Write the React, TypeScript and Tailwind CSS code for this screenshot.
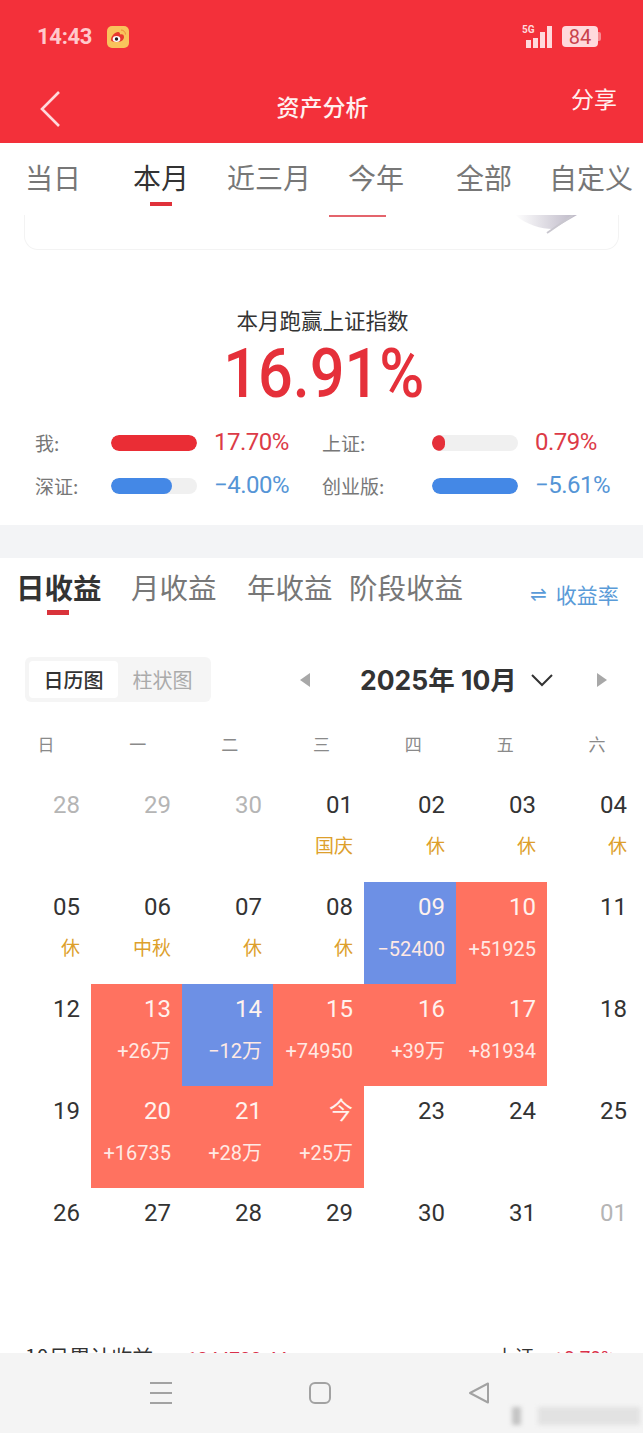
const RED = "#f3303a";
const CN = '"Noto Sans CJK SC", "Noto Sans", sans-serif';
const NUM = '"Roboto", "Noto Sans CJK SC", sans-serif';

type Day = { d: string; sub?: string; tone?: "up" | "down"; muted?: boolean };

const rest = (d: string, sub = "休"): Day => ({ d, sub });
const up = (d: string, sub: string): Day => ({ d, sub, tone: "up" });
const down = (d: string, sub: string): Day => ({ d, sub, tone: "down" });

// calendar rows, Sunday first
const weeks: Day[][] = [
  [{ d: "28", muted: true }, { d: "29", muted: true }, { d: "30", muted: true }, rest("01", "国庆"), rest("02"), rest("03"), rest("04")],
  [rest("05"), rest("06", "中秋"), rest("07"), rest("08"), down("09", "−52400"), up("10", "+51925"), { d: "11" }],
  [{ d: "12" }, up("13", "+26万"), down("14", "−12万"), up("15", "+74950"), up("16", "+39万"), up("17", "+81934"), { d: "18" }],
  [{ d: "19" }, up("20", "+16735"), up("21", "+28万"), up("今", "+25万"), { d: "23" }, { d: "24" }, { d: "25" }],
  [{ d: "26" }, { d: "27" }, { d: "28" }, { d: "29" }, { d: "30" }, { d: "31" }, { d: "01", muted: true }],
];

function WeiboIcon() {
  return (
    <svg width="22" height="22" viewBox="0 0 22 22">
      <rect width="22" height="22" rx="5" fill="#f9c35c" />
      <path d="M4 14c0-4 4-8 7-8 2 0 2 1.500 2 2.500 2-.5 4 0 4 2.500 0 3-3 5-7 5-3.500 0-6-.5-6-2z" fill="#e8392f" />
      <ellipse cx="9.500" cy="13" rx="3.800" ry="3" fill="#fff" />
      <circle cx="9.500" cy="13" r="1.700" fill="#222" />
      <path d="M14 4c2.500 0 4.500 2 4.500 4.500" stroke="#f08a3c" strokeWidth="1" fill="none" />
    </svg>
  );
}

function Signal() {
  return (
    <div className="relative flex h-[23px] w-[30px] items-end justify-end gap-[2px]">
      <span className="absolute left-0 top-0 text-[10px] leading-[10px] font-bold text-[#ffd9dc]" style={{ fontFamily: NUM }}>5G</span>
      <span className="h-[8px] w-[5px] bg-[#ffd9dc]" />
      <span className="h-[10px] w-[5px] bg-[#ffd9dc]" />
      <span className="h-[16px] w-[5px] bg-[#ffd9dc]" />
      <span className="h-[22px] w-[5px] bg-[#ffd9dc]" />
    </div>
  );
}

function Tab({ label, active, className }: { label: string; active?: boolean; className: string }) {
  return (
    <div className={`relative text-[28px] leading-[34px] ${active ? "text-[#333333]" : "text-[#777777]"} ${className}`}>
      {label}
      {active && <span className="absolute left-[17px] top-[42px] h-[4px] w-[22px] bg-[#e0313a]" />}
    </div>
  );
}

function Compare({ label, value, fill, color, valueColor, labelW }: { label: string; value: string; fill: number; color: string; valueColor: string; labelW: number }) {
  return (
    <div className="flex items-center">
      <span className="text-[19px] leading-[24px] text-[#777777]" style={{ width: labelW }}>{label}</span>
      <div className="h-[16px] w-[86px] overflow-hidden rounded-full bg-[#f0f0f0]">
        <div className="h-full rounded-full" style={{ width: `${fill}%`, background: color }} />
      </div>
      <span className="mb-[2px] ml-[17px] text-[24px] leading-[30px] tracking-[-0.5px]" style={{ color: valueColor, fontFamily: NUM }}>{value}</span>
    </div>
  );
}

function Cell({ day, last }: { day: Day; last: boolean }) {
  const tinted = day.tone != null;
  const bg = day.tone === "up" ? "bg-[#ff7260]" : day.tone === "down" ? "bg-[#6d90e5]" : "";
  const numColor = tinted ? "text-[#fff2ee]" : day.muted ? "text-[#b5b5b5]" : "text-[#333333]";
  return (
    <div className={`flex h-[102px] flex-col items-end pt-[9px] ${last ? "pr-[16px]" : "pr-[11px]"} ${bg}`}>
      <span className={`text-[24px] leading-[32px] ${numColor}`} style={{ fontFamily: NUM }}>{day.d}</span>
      {day.sub && (
        <span className={`mt-[14px] leading-[24px] ${tinted ? "text-[20px] text-[#ffe9e4]" : "text-[19px] text-[#dd9f2c]"}`} style={{ fontFamily: NUM }}>
          {day.sub}
        </span>
      )}
    </div>
  );
}

export default function App() {
  return (
    <div className="relative h-[1433px] w-[643px] overflow-hidden bg-white" style={{ fontFamily: CN }}>
      {/* Red header */}
      <div className="h-[143px]" style={{ background: RED }}>
        <div className="flex h-[72px] items-center pl-[37px] pr-[42px] pt-[1px]">
          <span className="text-[22px] font-bold tracking-[-0.3px] text-[#ffc9cc]" style={{ fontFamily: NUM }}>14:43</span>
          <span className="ml-[15px]"><WeiboIcon /></span>
          <div className="ml-auto flex items-center gap-[10px]">
            <Signal />
            <div className="flex items-center">
              <div className="flex h-[21px] w-[36px] items-center justify-center rounded-[4px] bg-[#ffd9dc] text-[20px] text-[#c9424b]" style={{ fontFamily: NUM }}>84</div>
              <span className="h-[9px] w-[3px] rounded-r-[2px] bg-[#f78a90]" />
            </div>
          </div>
        </div>
        <div className="relative flex h-[71px] items-start justify-center">
          <svg className="absolute left-[38px] top-[18px]" width="24" height="38" viewBox="0 0 24 38" fill="none">
            <path d="M21 2 4 19l17 17" stroke="#ffd9db" strokeWidth="2.600" />
          </svg>
          <span className="ml-[2px] mt-[19px] text-[23px] leading-[30px] font-medium text-[#fff0f0]">资产分析</span>
          <span className="absolute left-[571px] top-[11px] text-[23px] leading-[30px] text-[#fff0f0]">分享</span>
        </div>
      </div>

      {/* Range tabs */}
      <div className="relative z-10 flex h-[72px] bg-white pl-[25px] pt-[17px]">
        <Tab label="当日" className="w-[108px]" />
        <Tab label="本月" active className="w-[94px]" />
        <Tab label="近三月" className="w-[121px]" />
        <Tab label="今年" className="w-[108px]" />
        <Tab label="全部" className="w-[93px]" />
        <Tab label="自定义" className="w-[90px] whitespace-nowrap" />
      </div>

      {/* Scrolled card stub */}
      <div className="relative mx-[24px] -mt-[40px] h-[75px] rounded-b-[14px] border border-t-0 border-[#f3f3f3]">
        <span className="absolute left-[304px] top-[40px] h-[2px] w-[57px] bg-[#e4646c]" />
        <svg className="absolute left-[478px] top-[40px]" width="80" height="26" viewBox="0 0 80 26">
          <defs>
            <linearGradient id="fold" x1="0" x2="1" y1="0" y2="0">
              <stop offset="0" stopColor="#ffffff" />
              <stop offset="1" stopColor="#bcb7c6" />
            </linearGradient>
          </defs>
          <path d="M12 0h62L50 14C38 14 24 10 12 0z" fill="url(#fold)" />
          <path d="M70 0 44 18" stroke="#c9c7cf" strokeWidth="2" />
        </svg>
      </div>

      {/* Summary */}
      <div className="mt-[55px] flex flex-col items-center">
        <div className="ml-[2px] text-[21.500px] leading-[30px] text-[#333333]">本月跑赢上证指数</div>
        <div className="ml-[5px] mt-[1px] scale-x-[0.9] text-[68px] leading-[76px] font-medium text-[#e5303a]" style={{ fontFamily: NUM }}>16.91%</div>
      </div>
      <div className="mt-[15px] grid grid-cols-[287px_1fr] gap-y-[11px] pl-[35px]">
        <Compare label="我:" value="17.70%" fill={100} color="#ea2d35" valueColor="#dc3b47" labelW={76} />
        <Compare label="上证:" value="0.79%" fill={15} color="#e5303a" valueColor="#dc3b47" labelW={110} />
        <Compare label="深证:" value="−4.00%" fill={71} color="#4488e6" valueColor="#5595d6" labelW={76} />
        <Compare label="创业版:" value="−5.61%" fill={100} color="#4488e6" valueColor="#5595d6" labelW={110} />
      </div>

      <div className="mt-[23px] h-[33px] bg-[#f3f4f6]" />

      {/* Income tabs */}
      <div className="relative mt-[4px] flex h-[50px] items-center pl-[16px] text-[28.500px] leading-[36px] text-[#777777]">
        <div className="relative w-[115px] font-bold text-[#333333]">
          日收益
          <span className="absolute left-[31px] top-[41px] h-[5px] w-[22px] bg-[#d9333b]" />
        </div>
        <div className="w-[116px]">月收益</div>
        <div className="w-[102px]">年收益</div>
        <div className="w-[181px]">阶段收益</div>
        <div className="flex items-center gap-[9px] pt-[14px] text-[21px] text-[#5a9bd8]">
          <span className="text-[20px] leading-none" style={{ fontFamily: '"DejaVu Sans", sans-serif' }}>⇌</span>
          <span>收益率</span>
        </div>
      </div>

      {/* View switch + month picker */}
      <div className="mt-[45px] flex h-[45px] items-center pl-[25px]">
        <div className="flex h-[45px] w-[186px] rounded-[6px] bg-[#f5f5f5] p-[4px]">
          <div className="flex w-[89px] items-center justify-center rounded-[4px] bg-white text-[20px] font-medium text-[#333333]">日历图</div>
          <div className="flex flex-1 items-center justify-center text-[20px] text-[#aaaaaa]">柱状图</div>
        </div>
        <svg className="ml-[88px]" width="12" height="16" viewBox="0 0 12 16"><path d="M11 1v14L1 8z" fill="#a8a8a8" /></svg>
        <span className="ml-[49px] text-[26.500px] leading-[36px] font-bold whitespace-nowrap text-[#333333]" style={{ fontFamily: '"Inter", "Noto Sans CJK SC", sans-serif' }}>2025年 10月</span>
        <svg className="ml-[13px]" width="24" height="14" viewBox="0 0 24 14" fill="none"><path d="M2 2l10 10L22 2" stroke="#333333" strokeWidth="2" /></svg>
        <svg className="ml-[42px]" width="12" height="16" viewBox="0 0 12 16"><path d="M1 1v14l10-7z" fill="#a8a8a8" /></svg>
      </div>

      {/* Weekday header */}
      <div className="mt-[27px] grid h-[30px] grid-cols-7 items-center text-center text-[17px] text-[#8a8a8a]">
        {["日", "一", "二", "三", "四", "五", "六"].map((w) => (
          <span key={w}>{w}</span>
        ))}
      </div>

      {/* Calendar */}
      <div className="mt-[21px] grid grid-cols-[91px_91px_91px_91px_92px_91px_96px]">
        {weeks.flat().map((day, i) => (
          <Cell key={i} day={day} last={i % 7 === 6} />
        ))}
      </div>

      {/* Footer line cut by the nav bar */}
      <div className="absolute inset-x-0 bottom-0">
        <div className="flex h-[10px] items-start justify-between overflow-hidden pl-[25px] pr-[28px] leading-[26px]">
          <div className="text-[21px] text-[#333333]">10月累计收益: <span className="ml-[12px] text-[19px] text-[#d9304a]" style={{ fontFamily: NUM }}>+1044700.44</span></div>
          <div className="text-[19px] text-[#333333]">上证: <span className="ml-[10px] text-[#d9304a]" style={{ fontFamily: NUM }}>+0.79%</span></div>
        </div>
        <div className="relative flex h-[80px] items-center gap-[137px] bg-[#f4f4f4] pl-[150px]">
          <svg width="22" height="22" viewBox="0 0 22 22" fill="none" stroke="#a2a2a2" strokeWidth="2">
            <path d="M0 1h22M0 11h22M0 21h22" />
          </svg>
          <svg width="22" height="22" viewBox="0 0 22 22" fill="none" stroke="#a2a2a2" strokeWidth="2">
            <rect x="1" y="1" width="20" height="20" rx="5" />
          </svg>
          <svg width="22" height="22" viewBox="0 0 22 22" fill="none" stroke="#a2a2a2" strokeWidth="2">
            <path d="M20 1.500v19L2 11z" strokeLinejoin="round" />
          </svg>
          {/* blurred watermark */}
          <div className="absolute left-[512px] top-[54px] flex h-[18px] w-[128px] gap-[17px] blur-[2px]">
            <span className="h-full w-[9px] bg-[#c4c4c4]" />
            <span className="h-full flex-1 bg-[#e2e2e2]" />
          </div>
        </div>
      </div>
    </div>
  );
}
